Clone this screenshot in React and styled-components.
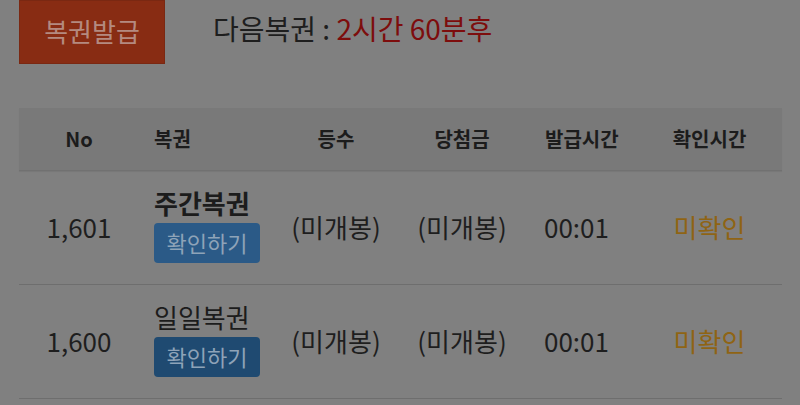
import React from 'react';
import styled, { createGlobalStyle } from 'styled-components';

const GlobalStyle = createGlobalStyle`
  html, body {
    margin: 0;
    padding: 0;
    background: #808080;
  }
  body {
    font-family: "Noto Sans CJK KR", "Noto Sans", sans-serif;
    color: #1e1e1e;
  }
`;

const rows = [
  { no: '1,601', name: '주간복권', bold: true, rank: '(미개봉)', prize: '(미개봉)', time: '00:01', check: '미확인', active: true },
  { no: '1,600', name: '일일복권', bold: false, rank: '(미개봉)', prize: '(미개봉)', time: '00:01', check: '미확인', active: false },
];

const App = () => {
  return (
    <>
      <GlobalStyle />
      <Page>
        <TopBar>
          <IssueButton>복권발급</IssueButton>
          <NextInfo>
            다음복권 : <Remain>2시간 60분후</Remain>
          </NextInfo>
        </TopBar>

        <Table>
          <HeadRow>
            <HeadCell $align="center">No</HeadCell>
            <HeadCell $align="left" $pad="15px">복권</HeadCell>
            <HeadCell $align="center">등수</HeadCell>
            <HeadCell $align="center">당첨금</HeadCell>
            <HeadCell $align="left" $pad="18px">발급시간</HeadCell>
            <HeadCell $align="center">확인시간</HeadCell>
          </HeadRow>
          {rows.map((r) => (
            <BodyRow key={r.no}>
              <Cell $align="center">{r.no}</Cell>
              <Cell $align="left" $pad="15px">
                <TicketStack>
                  <TicketName $bold={r.bold}>{r.name}</TicketName>
                  <CheckButton $active={r.active}>확인하기</CheckButton>
                </TicketStack>
              </Cell>
              <Cell $align="center">{r.rank}</Cell>
              <Cell $align="center">{r.prize}</Cell>
              <Cell $align="left" $pad="17px">{r.time}</Cell>
              <Status>{r.check}</Status>
            </BodyRow>
          ))}
        </Table>
      </Page>
    </>
  );
};

export default App;

const Page = styled.div`
  padding: 0 18px 0 19px;
`;

const TopBar = styled.div`
  display: flex;
  align-items: center;
  gap: 48px;
  height: 64px;
`;

const IssueButton = styled.button`
  width: 146px;
  height: 64px;
  margin: 0;
  padding: 0 0 4px;
  border: 1px solid #7a2812;
  background: #882c13;
  color: #b48a80;
  font-family: inherit;
  font-size: 26px;
  border-radius: 0;
`;

const NextInfo = styled.div`
  font-size: 28px;
  color: #1e1e1e;
  margin-top: -8px;
`;

const Remain = styled.span`
  color: #7d0d0d;
`;

const Table = styled.div`
  margin-top: 44px;
  width: 763px;
`;

const Grid = styled.div`
  display: grid;
  grid-template-columns: 120px 136px 122px 130px 110px 1fr;
  align-items: center;
`;

const HeadRow = styled(Grid)`
  height: 62px;
  background: #797979;
  border-bottom: 1px solid #717171;
  box-shadow: 0 1px 1px rgba(0, 0, 0, 0.06);
`;

const HeadCell = styled.div`
  text-align: ${({ $align }) => $align};
  padding-left: ${({ $pad }) => $pad || '0'};
  font-size: 20px;
  font-weight: 700;
  color: #1c1c1c;
  padding-bottom: 2px;
`;

const BodyRow = styled(Grid)`
  height: 113px;
  border-bottom: 1px solid #6e6e6e;
`;

const Cell = styled.div`
  text-align: ${({ $align }) => $align};
  padding-left: ${({ $pad }) => $pad || '0'};
  font-size: 26px;
  color: #1e1e1e;
  padding-bottom: 2px;
`;

const Status = styled(Cell).attrs({ $align: 'center' })`
  color: #8f6414;
`;

const TicketStack = styled.div`
  display: flex;
  flex-direction: column;
  align-items: flex-start;
  gap: 2px;
  margin-top: -6px;
`;

const TicketName = styled.div`
  font-size: 26px;
  font-weight: ${({ $bold }) => ($bold ? 700 : 400)};
  line-height: 36px;
  color: #1c1c1c;
`;

const CheckButton = styled.button`
  width: 106px;
  height: 40px;
  margin: 0;
  padding: 0 0 2px;
  border: none;
  border-radius: 4px;
  background: ${({ $active }) => ($active ? '#2b5a87' : '#1f4a71')};
  color: #8ea3b8;
  font-family: inherit;
  font-size: 22px;
`;
